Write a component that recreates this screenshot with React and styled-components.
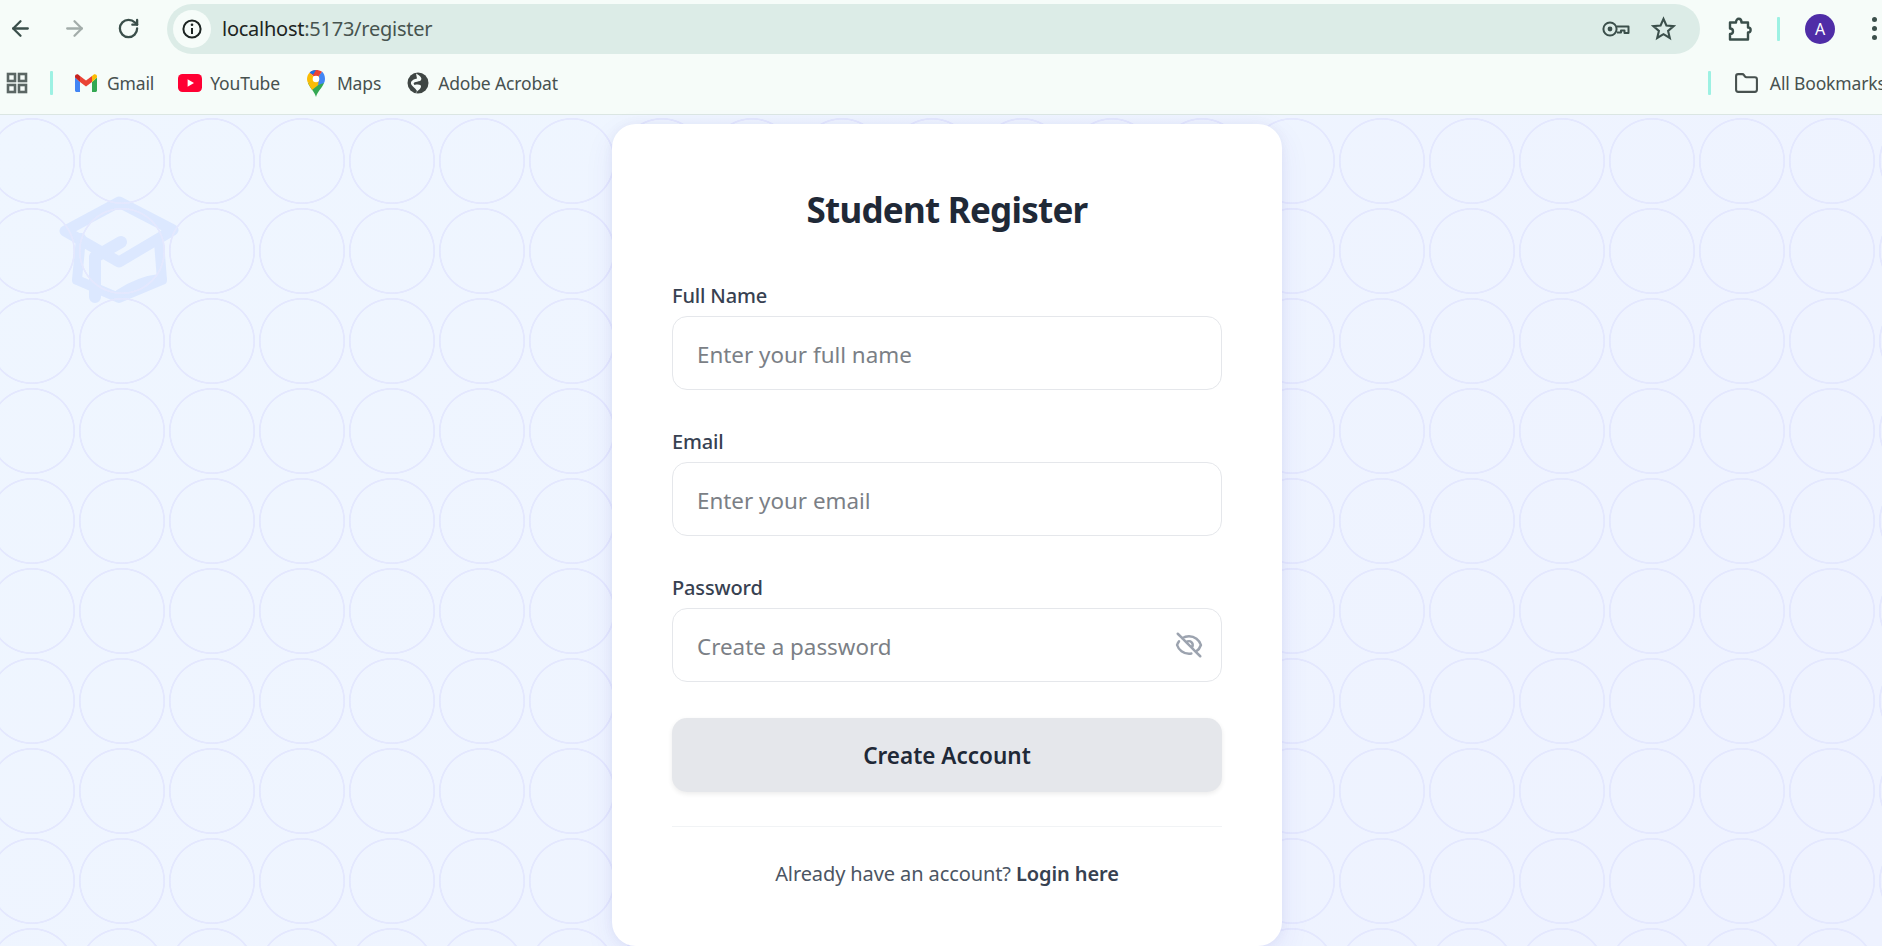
import React from 'react';
import styled, { createGlobalStyle } from 'styled-components';
import { ArrowLeft, ArrowRight, RotateCw, Folder } from 'lucide-react';
import { HiOutlineEyeOff } from 'react-icons/hi';

const GlobalStyle = createGlobalStyle`
  * { box-sizing: border-box; }
  html, body { margin: 0; height: 100%; overflow: hidden; }
  body { font-family: "Noto Sans", "Open Sans", sans-serif; background: #eff6ff; }
  svg { flex: none; }
`;

const Page = styled.div`
  width: 1882px;
  height: 946px;
  display: flex;
  flex-direction: column;
  overflow: hidden;
`;

const Chrome = styled.header`
  height: 115px;
  flex: none;
  background: #f6fcf9;
  border-bottom: 1px solid #dbe6e3;
`;

const Toolbar = styled.div`
  height: 57px;
  display: flex;
  align-items: center;
`;

const NavButton = styled.span`
  flex: none;
  width: 54px;
  height: 40px;
  display: flex;
  align-items: center;
  justify-content: center;
  color: ${({ $muted }) => ($muted ? '#a3adaa' : '#3b4f4b')};
`;

const NavGroup = styled.div`
  display: flex;
  margin-left: -7px;
  margin-right: 12px;
`;

const UrlPill = styled.div`
  width: 1533px;
  height: 50px;
  flex: none;
  border-radius: 25px;
  background: #dcece7;
  display: flex;
  align-items: center;
  padding: 0 24px 0 6px;
`;

const SiteInfo = styled.span`
  width: 38px;
  height: 38px;
  flex: none;
  border-radius: 50%;
  background: #f6fcf9;
  display: flex;
  align-items: center;
  justify-content: center;
  margin-right: 11px;
`;

const UrlText = styled.span`
  flex: 1;
  font-size: 20px;
  letter-spacing: -0.25px;
  color: #47544f;
  b { font-weight: 400; color: #1c2422; }
`;

const PillIcons = styled.div`
  display: flex;
  align-items: center;
  gap: 21px;
  color: #3b4f4b;
`;

const ToolbarRight = styled.div`
  display: flex;
  align-items: center;
  margin-left: 26px;
  color: #3b4f4b;
`;

const Divider = styled.span`
  flex: none;
  width: 3px;
  height: 24px;
  border-radius: 1px;
  background: #9df1e3;
  margin-left: ${({ $gap }) => $gap}px;
`;

const Avatar = styled.span`
  width: 30px;
  height: 30px;
  border-radius: 50%;
  background: #4f2da7;
  color: #fff;
  font-size: 16px;
  display: flex;
  align-items: center;
  justify-content: center;
  margin: 0 37px 0 25px;
`;

const Dots = styled.span`
  display: flex;
  flex-direction: column;
  gap: 4px;
  i { width: 5px; height: 5px; border-radius: 50%; background: #3b4f4b; display: block; }
`;

const BookmarkBar = styled.div`
  height: 57px;
  display: flex;
  align-items: center;
  padding: 0 0 5px 6px;
  white-space: nowrap;
  overflow: hidden;
`;

const Bookmark = styled.span`
  display: flex;
  align-items: center;
  gap: ${({ $iconGap }) => $iconGap}px;
  flex: none;
  margin-left: ${({ $gap }) => $gap}px;
  font-size: 17.5px;
  letter-spacing: -0.15px;
  color: #47514f;
`;

const Stage = styled.main`
  position: relative;
  flex: 1;
  min-height: 0;
  display: flex;
  justify-content: center;
  align-items: flex-start;
  padding: 9px 0 0 12px;
  background: linear-gradient(135deg, #eff6ff, #eef2ff);

  &::after {
    content: '';
    position: absolute;
    inset: 0;
    pointer-events: none;
    background-image: radial-gradient(circle at 45px 45px, transparent 41px, #e4e8fe 41.6px, #e4e8fe 42.8px, transparent 43.4px);
    background-size: 90px 90px;
    background-position: -13px 1px;
  }
`;

const HatMark = styled.div`
  position: absolute;
  left: 55px;
  top: 75px;
  color: #dce8ff;
`;

const Card = styled.section`
  position: relative;
  z-index: 1;
  width: 670px;
  padding: 60px 60px 58px;
  background: #fff;
  border-radius: 24px;
  box-shadow: 0 10px 30px rgba(79, 70, 229, 0.08), 0 0 12px rgba(30, 41, 90, 0.05);
`;

const Title = styled.h1`
  margin: 0 0 46px;
  text-align: center;
  font-size: 35px;
  line-height: 52px;
  font-weight: 700;
  letter-spacing: -0.75px;
  color: #1f2937;
`;

const Field = styled.div`
  margin-bottom: ${({ $last }) => ($last ? 36 : 38)}px;
`;

const Label = styled.label`
  display: block;
  height: 26px;
  margin-bottom: 8px;
  font-size: 20px;
  line-height: 28px;
  font-weight: 500;
  letter-spacing: -0.15px;
  color: #374151;
`;

const InputWrap = styled.div`
  position: relative;
`;

const Input = styled.input`
  display: block;
  width: 100%;
  height: 74px;
  padding: 2px 24px 0;
  border: 1.5px solid #e5e7eb;
  border-radius: 15px;
  background: #fff;
  outline: none;
  font-family: inherit;
  font-size: 22.4px;
  color: #1f2937;
  &::placeholder { color: #7b7f86; opacity: 1; }
`;

const EyeButton = styled.span`
  position: absolute;
  right: 18px;
  top: 22px;
  display: flex;
  color: #9ca3af;
`;

const SubmitButton = styled.button`
  display: block;
  width: 100%;
  height: 74px;
  border: 0;
  border-radius: 15px;
  background: #e5e7eb;
  box-shadow: 0 2px 5px rgba(0, 0, 0, 0.08);
  font-family: inherit;
  font-size: 22.5px;
  font-weight: 600;
  color: #1f2937;
`;

const Rule = styled.hr`
  margin: 34px 0 33px;
  border: 0;
  border-top: 1px solid #f1f3f5;
`;

const Footer = styled.p`
  margin: 0;
  text-align: center;
  font-size: 20px;
  line-height: 28px;
  letter-spacing: -0.1px;
  color: #4b5563;
  a { font-weight: 600; color: #374151; text-decoration: none; }
`;

const InfoIcon = () => (
  <svg width="22" height="22" viewBox="0 0 22 22" fill="none" stroke="#1c2422" strokeWidth="2">
    <circle cx="11" cy="11" r="8.6" />
    <path d="M11 10v6" />
    <circle cx="11" cy="6.8" r="1.3" fill="#1c2422" stroke="none" />
  </svg>
);

const KeyIcon = () => (
  <svg width="28" height="18" viewBox="0 0 28 18" fill="none" stroke="currentColor" strokeWidth="2">
    <circle cx="8" cy="9" r="6.6" />
    <circle cx="8" cy="9" r="2.4" fill="currentColor" stroke="none" />
    <path d="M14.5 6.500H26.500V13H22.500V10.500H19V12.500H15" strokeLinejoin="round" />
  </svg>
);

const StarIcon = () => (
  <svg width="25" height="25" viewBox="0 0 25 25" fill="none" stroke="currentColor" strokeWidth="2.1" strokeLinejoin="miter">
    <path d="M12.500 2.800 15.400 9.500 22.600 10.100 17.100 14.900 18.800 22 12.500 18.200 6.200 22 7.900 14.900 2.400 10.100 9.600 9.500Z" />
  </svg>
);

const PuzzleIcon = () => (
  <svg width="26" height="26" viewBox="0 0 26 26" fill="none" stroke="currentColor" strokeWidth="2.4" strokeLinejoin="round">
    <path d="M4 6.500H10C10 1.500 15.500 1.500 15.500 6.500H22V11.500C25.500 11.500 25.500 16.500 22 16.500V23.500H4V18C8 18 8 12.500 4 12.500Z" />
  </svg>
);

const GridIcon = () => (
  <svg width="22" height="22" viewBox="0 0 22 22" fill="none" stroke="#5b6664" strokeWidth="2.6">
    <rect x="2" y="2" width="7" height="7" />
    <rect x="13" y="2" width="7" height="7" />
    <rect x="2" y="13" width="7" height="7" />
    <rect x="13" y="13" width="7" height="7" />
  </svg>
);

const GmailIcon = () => (
  <svg width="22" height="18" viewBox="0 0 22 18">
    <path d="M0 3.500V16.500C0 17.300.7 18 1.500 18H5V8Z" fill="#4285f4" />
    <path d="M17 8V18H20.500C21.300 18 22 17.300 22 16.500V3.500Z" fill="#34a853" />
    <path d="M5 8 11 12.500 17 8V2L11 6.500 5 2Z" fill="#ea4335" />
    <path d="M0 3.500 5 8V2L3.500.8C2-.4 0 .7 0 2.500Z" fill="#c5221f" />
    <path d="M17 2V8L22 3.500V2.500C22 .7 20-.4 18.500.8Z" fill="#fbbc04" />
  </svg>
);

const YoutubeIcon = () => (
  <svg width="24" height="18" viewBox="0 0 24 18">
    <rect width="24" height="18" rx="4.5" fill="#ff0033" />
    <path d="M9.600 5.200 16 9l-6.400 3.800Z" fill="#fff" />
  </svg>
);

const MapsIcon = () => (
  <svg width="18" height="27" viewBox="0 0 18 27">
    <path d="M9 27C7.600 21.500 2.800 18 1 13L9 9l8 4C15.200 18 10.400 21.500 9 27Z" fill="#34a853" />
    <path d="M1 13C.3 11.600 0 10.400 0 9 0 6.600 1 4.400 2.600 2.800L7 7 6 11Z" fill="#fbbc04" />
    <path d="M1.200 13.400 12 5.500 15 12 5 20Z" fill="#fbbc04" />
    <path d="M12 5.500 15 1.400C16.900 3 18 5.800 18 9 18 10.600 17.600 11.900 17 13L11 15 12 9Z" fill="#4285f4" />
    <path d="M2.600 2.800C4.200 1 6.500 0 9 0 11.200 0 13.300.5 15 1.800L11.800 6 6.500 6.300Z" fill="#ea4335" />
    <path d="M6.300 4.500 2.600 2.800C4.200 1 6.500 0 9 0Z" fill="#1a73e8" />
    <circle cx="9" cy="9" r="3.300" fill="#fff" />
  </svg>
);

const AcrobatIcon = () => (
  <svg width="22" height="22" viewBox="0 0 22 22">
    <circle cx="11" cy="11" r="10.500" fill="#3f4644" />
    <path d="M9 1.500C14 4 16 7 13 9 9 10 5 10 7.500 13 11 12 14.500 12.500 14 15 13 18 10 19 8.500 20.500 13 21 8 16.500 5.500 14 2 10.500 5 7.500 10 6.500 11 3.800 9 1.500Z" fill="#f6fcf9" />
  </svg>
);

const HatIcon = () => (
  <svg width="130" height="118" viewBox="0 0 130 118" fill="none" stroke="currentColor" strokeWidth="11" strokeLinecap="round" strokeLinejoin="round">
    <path d="M64 12 10 41 64 72 118 40Z" />
    <path d="M26 48 22 90 64 108 107 90 104 52" strokeWidth="10" />
    <path d="M64 104C76 96 90 90 107 88" strokeWidth="9" />
    <path d="M66 52 40 67V107" strokeWidth="12" />
  </svg>
);

export default function App() {
  return (
    <Page>
      <GlobalStyle />
      <Chrome>
        <Toolbar>
          <NavGroup>
            <NavButton><ArrowLeft size={25} strokeWidth={2.2} /></NavButton>
            <NavButton $muted><ArrowRight size={25} strokeWidth={2.2} /></NavButton>
            <NavButton><RotateCw size={23} strokeWidth={2.4} /></NavButton>
          </NavGroup>
          <UrlPill>
            <SiteInfo><InfoIcon /></SiteInfo>
            <UrlText><b>localhost</b>:5173/register</UrlText>
            <PillIcons>
              <KeyIcon />
              <StarIcon />
            </PillIcons>
          </UrlPill>
          <ToolbarRight>
            <PuzzleIcon />
            <Divider $gap={25} />
            <Avatar>A</Avatar>
            <Dots><i /><i /><i /></Dots>
          </ToolbarRight>
        </Toolbar>
        <BookmarkBar>
          <GridIcon />
          <Divider $gap={22} />
          <Bookmark $gap={22} $iconGap={10}><GmailIcon />Gmail</Bookmark>
          <Bookmark $gap={24} $iconGap={8}><YoutubeIcon />YouTube</Bookmark>
          <Bookmark $gap={27} $iconGap={12}><MapsIcon />Maps</Bookmark>
          <Bookmark $gap={26} $iconGap={9}><AcrobatIcon />Adobe Acrobat</Bookmark>
          <Divider $gap={1150} />
          <Bookmark $gap={23} $iconGap={11}><Folder size={25} strokeWidth={2} />All Bookmarks</Bookmark>
        </BookmarkBar>
      </Chrome>
      <Stage>
        <HatMark><HatIcon /></HatMark>
        <Card>
          <Title>Student Register</Title>
          <Field>
            <Label>Full Name</Label>
            <Input placeholder="Enter your full name" />
          </Field>
          <Field>
            <Label>Email</Label>
            <Input placeholder="Enter your email" />
          </Field>
          <Field $last>
            <Label>Password</Label>
            <InputWrap>
              <Input placeholder="Create a password" />
              <EyeButton><HiOutlineEyeOff size={30} /></EyeButton>
            </InputWrap>
          </Field>
          <SubmitButton>Create Account</SubmitButton>
          <Rule />
          <Footer>Already have an account? <a href="#login">Login here</a></Footer>
        </Card>
      </Stage>
    </Page>
  );
}
